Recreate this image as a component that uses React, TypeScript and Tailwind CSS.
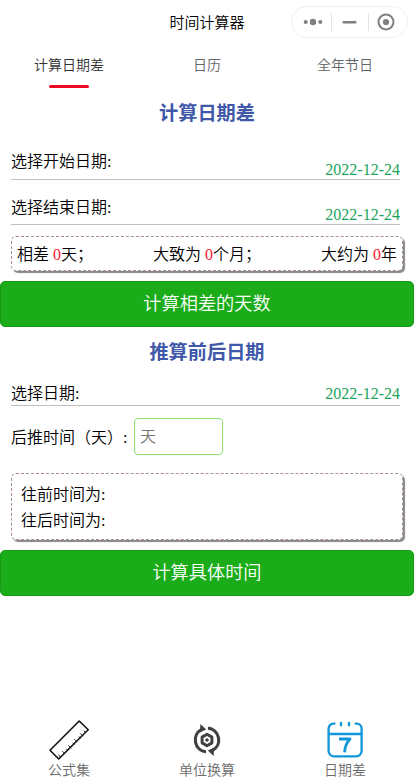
import React, { useState } from 'react';

interface DateRowProps {
  label: string;
  value: string;
  className: string;
  valueClassName?: string;
}

const TABS = ['计算日期差', '日历', '全年节日'];

const TODAY = '2022-12-24';

const RulerIcon = () => (
  <svg width="40" height="40" viewBox="0 0 40 40" fill="none" stroke="#111" strokeWidth="1.6" strokeLinejoin="round" strokeLinecap="round">
    <path d="M1 30.3L30.2 1L39.2 9.8L9.7 39Z" />
    <path strokeWidth="0.9" d="M9.8 35l1.4 1.8M13.6 31.4l2.2 2.4M17.8 29.2l1 1.4M19.6 25.6l2.4 2.4M24 23l1 1.4M25.6 19.4l2.4 2.4M30.2 16.8l1 1.4M31.4 13.6l2.4 2.4M35.2 11l1 1.4" />
  </svg>
);

const ConvertIcon = () => (
  <svg width="40" height="40" viewBox="0 0 40 40" fill="none" stroke="#404143">
    <path strokeWidth="3.2" d="M19 31.9A12 12 0 0 1 14.6 9.4" />
    <path strokeWidth="3.2" d="M21 8.1A12 12 0 0 1 25.4 30.6" />
    <path fill="#404143" stroke="none" d="M13.4 4l5.8 5.6-6.4 2.8zM26.6 36l-5.8-5.6 6.4-2.8z" />
    <path strokeWidth="3" strokeLinejoin="round" d="M20 14.3l4.9 2.85v5.7L20 25.7l-4.9-2.85v-5.7z" />
    <circle cx="20" cy="20" r="1.8" fill="#404143" stroke="none" />
  </svg>
);

const CalendarIcon = () => (
  <svg width="40" height="40" viewBox="0 0 40 40" fill="none" stroke="#1296db" strokeWidth="2.3" strokeLinecap="round">
    <path d="M9.5 3.6H8.6A5 5 0 0 0 3.6 8.6v22.4a5.3 5.3 0 0 0 5.3 5.3h22.4a5.3 5.3 0 0 0 5.3-5.3V8.6a5 5 0 0 0-5-5h-1" />
    <path d="M16 2.8v2.6M24 2.8v2.6M3.8 14h32.8" />
    <path strokeWidth="2.8" strokeLinecap="butt" strokeLinejoin="round" d="M14 19h11c-3.4 3.6-5.2 7.6-5.4 13.4" />
  </svg>
);

const NAV = [
  { name: '公式集', Icon: RulerIcon },
  { name: '单位换算', Icon: ConvertIcon },
  { name: '日期差', Icon: CalendarIcon },
];

const DateRow: React.FC<DateRowProps> = ({ label, value, className, valueClassName = '' }) => (
  <div className={`mr-[14px] ml-[11px] flex items-start justify-between border-b border-[#bfbfbf] leading-6 ${className}`}>
    <span>{label}</span>
    <span className={`text-[#1aa35a] ${valueClassName}`}>{value}</span>
  </div>
);

const SubmitButton: React.FC<{ children: React.ReactNode }> = ({ children }) => (
  <button className="block h-[46px] w-full shrink-0 rounded-[5px] border border-[#189a18] bg-[#1aad19] text-[18.2px] leading-none text-white">
    {children}
  </button>
);

const App: React.FC = () => {
  const [active, setActive] = useState(0);
  const [days, setDays] = useState('');

  return (
    <div className="flex h-[780px] w-[414px] flex-col bg-white font-['Liberation_Serif','Noto_Sans_CJK_SC',serif] text-base font-[350] text-black">
      {/* Barre de titre */}
      <header className="grid h-11 shrink-0 grid-cols-[1fr_auto_1fr] items-center">
        <h1 className="col-start-2 pt-0.5 text-[15px] leading-5 font-[350]">时间计算器</h1>
        <div className="mr-1.5 flex h-8 w-[117px] items-center justify-self-end rounded-full border border-[#efefef]">
          <svg width="115" height="30" viewBox="0 0 115 30" fill="#7f7f7f">
            <circle cx="13.7" cy="15" r="2" />
            <circle cx="21" cy="15" r="3.2" />
            <circle cx="28.3" cy="15" r="2" />
            <path fill="#e3e3e3" d="M39 6h1v18h-1zM76 6h1v18h-1z" />
            <rect x="50.5" y="14" width="14" height="2.6" rx="1" />
            <circle cx="94" cy="15" r="7.5" fill="none" stroke="#7f7f7f" strokeWidth="2" />
            <circle cx="94" cy="15" r="3.1" />
          </svg>
        </div>
      </header>

      {/* Onglets */}
      <nav className="grid h-11 shrink-0 grid-cols-3 text-sm">
        {TABS.map((tab, i) => (
          <button
            key={tab}
            onClick={() => setActive(i)}
            className={`flex flex-col items-center justify-between ${i === active ? 'text-[#323233]' : 'text-[#646566]'}`}
          >
            <span className="leading-[44px]">{tab}</span>
            {i === active && <span className="-mt-[3px] h-[3px] w-10 shrink-0 rounded-full bg-[#ee0a24]" />}
          </button>
        ))}
      </nav>

      <main className="flex flex-col">
        <h2 className="mt-[11px] mb-[21px] text-center text-[19.2px] leading-[30px] font-bold text-[#4058a8]">计算日期差</h2>
        <DateRow label="选择开始日期:" value={TODAY} className="h-[30px]" valueClassName="mt-2" />
        <DateRow label="选择结束日期:" value={TODAY} className="mt-4 h-[29px]" valueClassName="mt-[7px]" />

        <div className="mx-[11px] mt-[11px] mb-2.5 flex h-[35px] items-center justify-between rounded-[5px] border border-dashed border-[#a89088] px-[5px] pt-0.5 shadow-[2px_2px_1px_#888]">
          <span>相差 <span className="text-[#ff1a2e]">0</span>天；</span>
          <span>大致为 <span className="text-[#ff1a2e]">0</span>个月；</span>
          <span>大约为 <span className="text-[#ff1a2e]">0</span>年</span>
        </div>
        <SubmitButton>计算相差的天数</SubmitButton>

        <h2 className="mt-[11px] mb-[14px] text-center text-[19.2px] leading-[30px] font-bold text-[#4058a8]">推算前后日期</h2>
        <DateRow label="选择日期:" value={TODAY} className="h-6" />
        <label className="mt-3 ml-[11px] flex h-[37px] items-center">
          <span className="w-[123px] pt-0.5 whitespace-nowrap">后推时间（天）:</span>
          <input
            value={days}
            onChange={(e) => setDays(e.target.value)}
            placeholder="天"
            className="h-[37px] w-[89px] rounded-[4px] border border-[#8ee36f] px-[5px] pt-px outline-none placeholder:text-[#757575]"
          />
        </label>

        <div className="mx-[11px] mt-[18px] mb-2.5 flex h-[67px] flex-col justify-center rounded-[5px] border border-dashed border-[#a89088] px-[9px] pt-0.5 leading-[26px] shadow-[2px_2px_1px_#888]">
          <p>往前时间为:</p>
          <p>往后时间为:</p>
        </div>
        <SubmitButton>计算具体时间</SubmitButton>
      </main>

      {/* Navigation du bas */}
      <footer className="mt-auto grid shrink-0 grid-cols-3">
        {NAV.map(({ name, Icon }) => (
          <div key={name} className="grid h-[60px] grid-rows-[40px_20px] justify-items-center text-sm leading-[22px] text-[#6b6b6b]">
            <Icon />
            <span>{name}</span>
          </div>
        ))}
      </footer>
    </div>
  );
};

export default App;
